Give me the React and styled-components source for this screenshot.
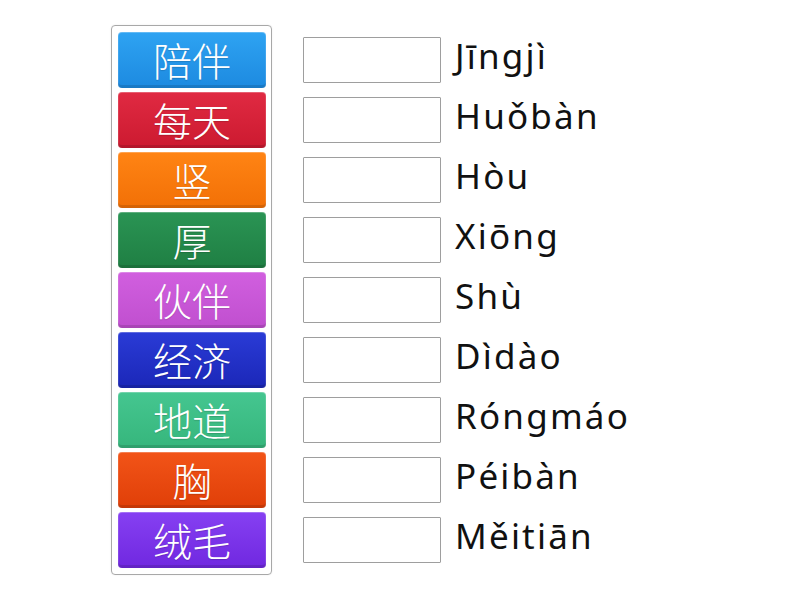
import React from "react";
import styled, { createGlobalStyle } from "styled-components";

const Global = createGlobalStyle`
  html, body { margin: 0; padding: 0; background: #ffffff; }
  body { font-family: "Noto Sans", "Noto Sans CJK SC", sans-serif; }
`;

const Page = styled.div`
  width: 800px;
  height: 600px;
  box-sizing: border-box;
  padding: 25px 0 0 111px;
  display: flex;
  align-items: flex-start;
  gap: 31px;
`;

const Panel = styled.div`
  box-sizing: border-box;
  width: 161px;
  border: 1px solid #a8a8a8;
  border-radius: 4px;
  padding: 6px 5px 6px 6px;
  display: flex;
  flex-direction: column;
  gap: 4px;
  box-shadow: 0 0 2px rgba(0, 0, 0, 0.08);
`;

const Tile = styled.div`
  height: 56px;
  box-sizing: border-box;
  border-radius: 4px;
  background: linear-gradient(180deg, ${(p) => p.$top} 0%, ${(p) => p.$bottom} 100%);
  box-shadow: inset 0 1px 0 rgba(255, 255, 255, 0.25),
    inset 1px 0 0 rgba(255, 255, 255, 0.12),
    inset -1px 0 0 rgba(255, 255, 255, 0.12),
    inset 0 -3px 0 rgba(0, 0, 0, 0.12);
  display: flex;
  align-items: center;
  justify-content: center;
  color: #ffffff;
  font-family: "Noto Sans CJK SC", "Noto Sans", sans-serif;
  font-weight: 300;
  font-size: 39px;
  line-height: 1;
  padding-bottom: 2px;
  text-shadow: 0 1px 1px rgba(0, 0, 0, 0.15);
`;

const Answers = styled.div`
  padding-top: 7px;
  display: flex;
  flex-direction: column;
  gap: 4px;
`;

const Row = styled.div`
  height: 56px;
  display: flex;
  align-items: center;
  gap: 14px;
`;

const Slot = styled.div`
  width: 138px;
  height: 46px;
  box-sizing: border-box;
  border: 1px solid #9e9e9e;
  border-radius: 1px;
  background: #ffffff;
`;

const Label = styled.div`
  font-family: "Noto Sans", sans-serif;
  font-size: 35px;
  letter-spacing: 2.2px;
  line-height: 1;
  color: #111111;
  padding-bottom: 10px;
`;

const tiles = [
  { t: "陪伴", top: "#2ea3f2", bottom: "#1d8ae0" },
  { t: "每天", top: "#e02a42", bottom: "#cc1a30" },
  { t: "竖", top: "#ff8414", bottom: "#f27006" },
  { t: "厚", top: "#2a9454", bottom: "#1f7f43" },
  { t: "伙伴", top: "#d15fdf", bottom: "#c04fcf" },
  { t: "经济", top: "#2a3bd6", bottom: "#1b27b8" },
  { t: "地道", top: "#45c690", bottom: "#36b67c" },
  { t: "胸", top: "#f25418", bottom: "#e03f08" },
  { t: "绒毛", top: "#8640f2", bottom: "#7028e0" },
];

const labels = [
  "Jīngjì",
  "Huǒbàn",
  "Hòu",
  "Xiōng",
  "Shù",
  "Dìdào",
  "Róngmáo",
  "Péibàn",
  "Měitiān",
];

export default function App() {
  return (
    <>
      <Global />
      <Page>
        <Panel>
          {tiles.map((x) => (
            <Tile key={x.t} $top={x.top} $bottom={x.bottom}>
              {x.t}
            </Tile>
          ))}
        </Panel>
        <Answers>
          {labels.map((l) => (
            <Row key={l}>
              <Slot />
              <Label>{l}</Label>
            </Row>
          ))}
        </Answers>
      </Page>
    </>
  );
}
